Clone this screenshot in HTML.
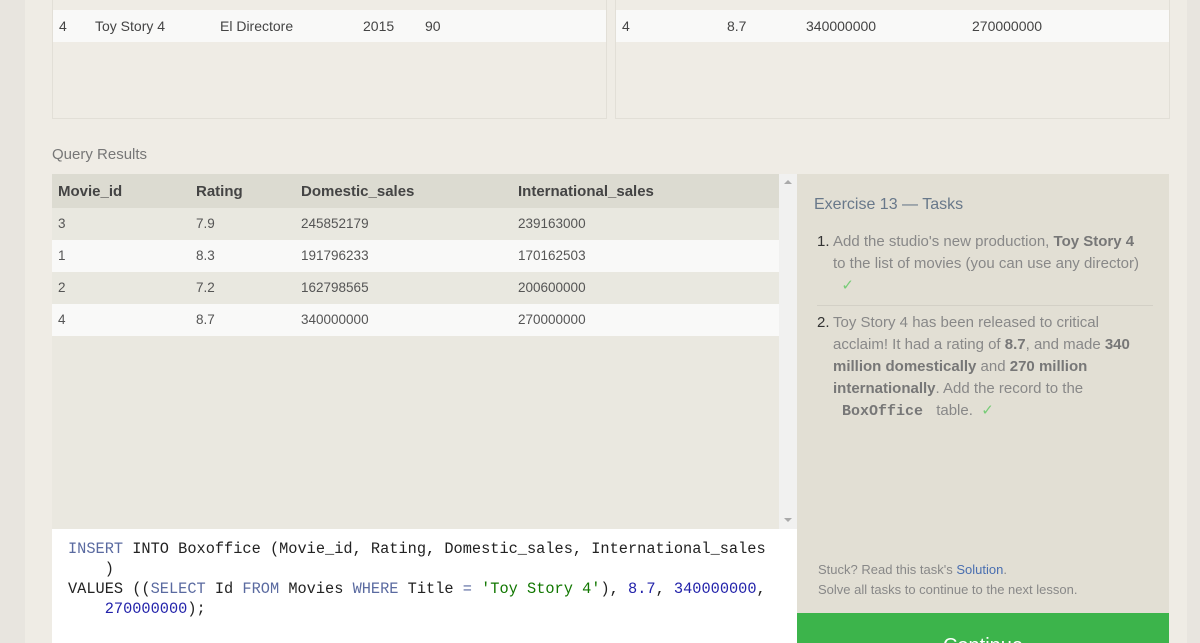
<!DOCTYPE html>
<html><head><style>
*{margin:0;padding:0;box-sizing:border-box}
body{width:1200px;height:643px;overflow:hidden;background:#e8e5df;font-family:"Liberation Sans",sans-serif;position:relative;font-size:14px;color:#555}
.main{position:absolute;left:25px;top:0;width:1162px;height:643px;background:#efece5}
.box{position:absolute;border:1px solid #e2dfd7;background:#efece5}
.row{position:absolute;left:0;right:0;height:32px;background:#f9f9f8;font-size:14px;color:#444}
.row span,.qr span{position:absolute;top:8px}
.qr{position:absolute;left:52px;width:727px;height:32px;font-size:13.5px;color:#555}
.qhead{position:absolute;left:52px;top:174px;width:727px;height:34px;background:#dcdbd1;font-weight:bold;color:#444;font-size:15px}
.qhead span{position:absolute;top:9px}
.code{position:absolute;left:52px;top:529px;width:745px;height:114px;background:#fff;font-family:"Liberation Mono",monospace;font-size:15.3px;color:#222;line-height:20px;padding:10px 0 0 16px;white-space:pre}
.kw{color:#5a6aa0}.num{color:#22a}.str{color:#170}
.panel{position:absolute;left:797px;top:174px;width:372px;height:439px;background:#e2dfd4}
b{color:#777}
</style></head><body>
<div class="main"></div>
<div class="box" style="left:52px;top:-5px;width:555px;height:124px">
 <div class="row" style="top:14px"><span style="left:6px">4</span><span style="left:42px">Toy Story 4</span><span style="left:167px">El Directore</span><span style="left:310px">2015</span><span style="left:372px">90</span></div>
</div>
<div class="box" style="left:615px;top:-5px;width:555px;height:124px">
 <div class="row" style="top:14px"><span style="left:6px">4</span><span style="left:111px">8.7</span><span style="left:190px">340000000</span><span style="left:356px">270000000</span></div>
</div>
<div style="position:absolute;left:52px;top:146px;font-size:15px;color:#777">Query Results</div>
<div style="position:absolute;left:52px;top:174px;width:745px;height:355px;background:#eae8e0"></div>
<div style="position:absolute;left:779px;top:174px;width:18px;height:355px;background:#f1f1f0"></div>
<div style="position:absolute;left:784px;top:180px;width:0;height:0;border:4px solid transparent;border-bottom:4px solid #aaa;border-top:0"></div>
<div style="position:absolute;left:784px;top:518px;width:0;height:0;border:4px solid transparent;border-top:4px solid #aaa;border-bottom:0"></div>
<div class="qhead"><span style="left:6px">Movie_id</span><span style="left:144px">Rating</span><span style="left:249px">Domestic_sales</span><span style="left:466px">International_sales</span></div>
<div class="qr" style="top:208px;background:#e9e8e0"><span style="left:6px">3</span><span style="left:144px">7.9</span><span style="left:249px">245852179</span><span style="left:466px">239163000</span></div>
<div class="qr" style="top:240px;background:#f9f9f8"><span style="left:6px">1</span><span style="left:144px">8.3</span><span style="left:249px">191796233</span><span style="left:466px">170162503</span></div>
<div class="qr" style="top:272px;background:#e9e8e0"><span style="left:6px">2</span><span style="left:144px">7.2</span><span style="left:249px">162798565</span><span style="left:466px">200600000</span></div>
<div class="qr" style="top:304px;background:#f9f9f8"><span style="left:6px">4</span><span style="left:144px">8.7</span><span style="left:249px">340000000</span><span style="left:466px">270000000</span></div>
<div class="code"><span class="kw">INSERT</span> INTO Boxoffice (Movie_id, Rating, Domestic_sales, International_sales
    )
VALUES ((<span class="kw">SELECT</span> Id <span class="kw">FROM</span> Movies <span class="kw">WHERE</span> Title <span class="kw">=</span> <span class="str">'Toy Story 4'</span>), <span class="num">8.7</span>, <span class="num">340000000</span>,
    <span class="num">270000000</span>);</div>
<div class="panel">
 <div style="position:absolute;left:17px;top:22px;font-size:16px;color:#68788a">Exercise 13 — Tasks</div>
 <div style="position:absolute;left:20px;top:57px;width:336px;font-size:15px;line-height:22px;color:#888">
  <div style="position:relative;padding-left:16px;padding-bottom:8px;border-bottom:1px solid #d3d0c6;white-space:nowrap"><span style="position:absolute;left:0;color:#333">1.</span>Add the studio's new production, <b>Toy Story 4</b><br>to the list of movies (you can use any director)<br>&nbsp;&nbsp;<span style="color:#7c7">✓</span></div>
  <div style="position:relative;padding-left:16px;margin-top:6px"><span style="position:absolute;left:0;color:#333">2.</span>Toy Story 4 has been released to critical acclaim! It had a rating of <b>8.7</b>, and made <b>340 million domestically</b> and <b>270 million internationally</b>. Add the record to the <b style="font-family:'Liberation Mono',monospace">&nbsp;BoxOffice&nbsp;</b> table. &nbsp;<span style="color:#7c7">✓</span></div>
 </div>
 <div style="position:absolute;left:21px;top:386px;font-size:13px;line-height:20px;color:#888">Stuck? Read this task's <span style="color:#4a6fb0">Solution</span>.<br>Solve all tasks to continue to the next lesson.</div>
</div>
<div style="position:absolute;left:797px;top:613px;width:372px;height:30px;background:#3cb44b;color:#fff;font-size:20px;text-align:center;padding-top:22px;overflow:hidden">Continue</div>
</body></html>
